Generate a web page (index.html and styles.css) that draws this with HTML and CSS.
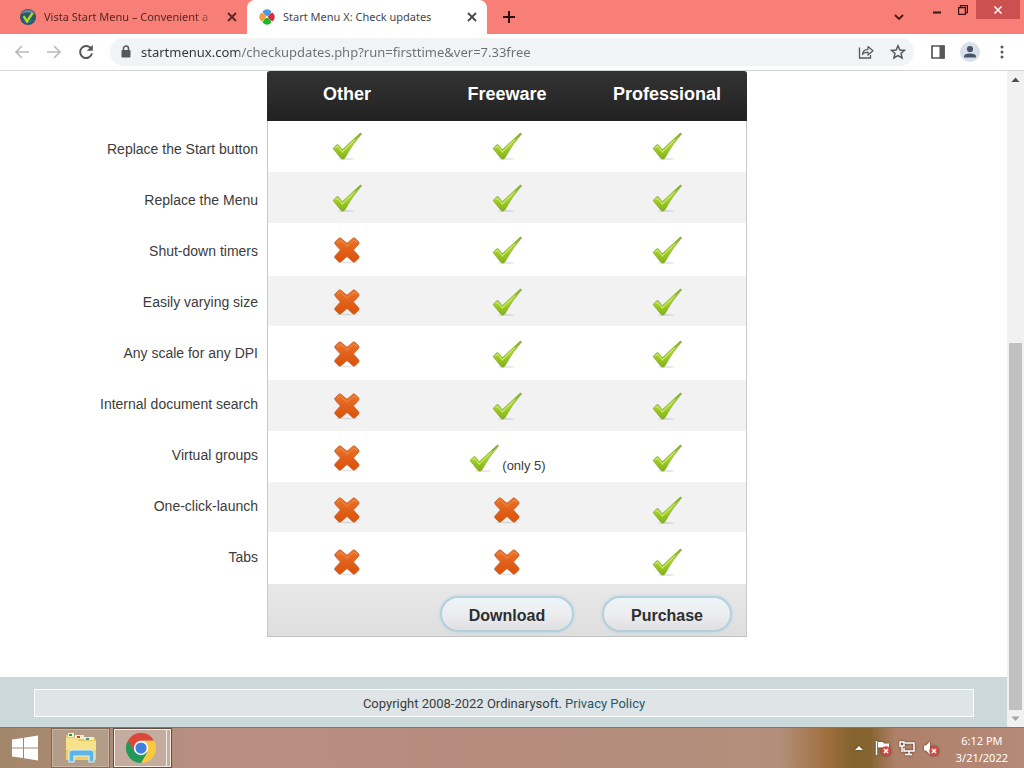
FILE: index.html
```html
<!DOCTYPE html>
<html lang="en">
<head>
<meta charset="utf-8">
<title>Start Menu X: Check updates</title>
<link rel="stylesheet" href="styles.css">
</head>
<body>
<svg class="defs" aria-hidden="true">
  <defs>
    <linearGradient id="green" x1="0" y1="0" x2="0" y2="1">
      <stop offset="0" stop-color="#7fa92e"/>
      <stop offset=".45" stop-color="#a5d63a"/>
      <stop offset="1" stop-color="#84b012"/>
    </linearGradient>
    <linearGradient id="orange" x1="0" y1="0" x2="0" y2="1">
      <stop offset="0" stop-color="#e8772e"/>
      <stop offset=".5" stop-color="#e2601a"/>
      <stop offset="1" stop-color="#dc5208"/>
    </linearGradient>
    <symbol id="yes" viewBox="0 0 32 32">
      <ellipse cx="15" cy="29" rx="8" ry="1" fill="#000" opacity=".1"/>
      <path d="M2 18.5 6 14.6Q6.8 14.2 7.5 15L11.2 19.8 29.4 3 30.6 3.8Q21 14.5 14.2 27.5 12.2 30.4 10 28.4Z" fill="url(#green)" stroke="#86a92f" stroke-width=".7"/>
      <path d="M4.4 18.2 6.6 16.2 11.2 22 24 9.600" fill="none" stroke="#c6e85a" stroke-width="1.2"/>
    </symbol>
    <symbol id="no" viewBox="0 0 32 32">
      <ellipse cx="16" cy="28.4" rx="11" ry="1" fill="#000" opacity=".1"/>
      <path d="M4 8 7.8 4.2Q9 3.4 10.2 4.5L16 9.3 21.6 4.5Q22.8 3.4 24 4.2L27.8 8Q28.6 9.2 27.500 10.4L22.4 16 27.500 21.6Q28.600 22.800 27.800 24L24 27.800Q22.800 28.600 21.600 27.500L16 22.500 10.200 27.500Q9 28.600 7.800 27.800L4 24Q3.200 22.800 4.300 21.600L9.400 16 4.300 10.400Q3.200 9.200 4 8Z" fill="url(#orange)" stroke="#c8602a" stroke-width=".8"/>
      <path d="M6 8.600 8.900 6 16 12.300 23 6 26 8.600" fill="none" stroke="#f08c48" stroke-width="1"/>
    </symbol>
    <symbol id="close" viewBox="0 0 10 10"><path d="M1 1 9 9M9 1 1 9" fill="none" stroke="currentColor" stroke-width="1.800"/></symbol>
    <symbol id="badge" viewBox="0 0 10 10"><circle cx="5" cy="5" r="4.800" fill="#d64a44"/><path d="M3 3 7 7M7 3 3 7" stroke="#fff" stroke-width="1.500"/></symbol>
  </defs>
</svg>

<header class="browser">
  <div class="tabstrip">
    <div class="tab">
      <svg class="favicon" viewBox="0 0 16 16"><circle cx="8" cy="8" r="8" fill="#2f5568"/><path d="M1 5A8 8 0 0 1 15 5Q8 2 1 5Z" fill="#5f8796"/><path d="M2 11Q8 17 14 11Q8 13 2 11Z" fill="#2b79a8"/><path d="M3.600 7.200 7 12.300 12.600 4" fill="none" stroke="#a5dc2c" stroke-width="2.400"/></svg>
      <button class="tab-title faded">Vista Start Menu – Convenient a</button>
      <button class="tab-close" aria-label="Close tab"><svg><use href="#close"/></svg></button>
    </div>
    <div class="tab active">
      <svg class="favicon" viewBox="0 0 16 16"><path d="M3.500 2.500Q8-2 12.500 2.500L10.800 5.500 8 7.400 5.200 5.500Z" fill="#4a9be0"/><path d="M13.500 3.500Q18 8 13.500 12.500L10.500 10.800 8.800 8 10.500 5.200Z" fill="#d92f3c"/><path d="M12.500 13.500Q8 18 3.500 13.500L5.200 10.500 8 8.600 10.800 10.500Z" fill="#1fb52b"/><path d="M2.500 12.500Q-2 8 2.500 3.500L5.500 5.200 7.200 8 5.500 10.800Z" fill="#eda03c"/></svg>
      <button class="tab-title">Start Menu X: Check updates</button>
      <button class="tab-close" aria-label="Close tab"><svg><use href="#close"/></svg></button>
    </div>
    <button class="new-tab" aria-label="New tab"><svg viewBox="0 0 12 12"><path d="M6 0V12M0 6H12" stroke="#2d0f0e" stroke-width="2"/></svg></button>
    <div class="window-controls">
      <button class="tab-search" aria-label="Search tabs"><svg viewBox="0 0 10 6"><path d="M1 1 5 5 9 1" fill="none" stroke="#4a1512" stroke-width="1.800"/></svg></button>
      <button class="window-button" aria-label="Minimize"><svg viewBox="0 0 10 10"><path d="M1 7.500H9" stroke="#3a1210" stroke-width="2"/></svg></button>
      <button class="window-button" aria-label="Restore"><svg viewBox="0 0 10 10"><path d="M.6 2.600H7.400V9.400H.6ZM2.400 2.400V.6H9.400V7.600H7.600" fill="none" stroke="#3a1210" stroke-width="1.200"/></svg></button>
      <button class="window-button window-close" aria-label="Close"><svg viewBox="0 0 10 10"><path d="M1.500 1.500 8.500 8.500M8.500 1.500 1.500 8.500" stroke="#fff" stroke-width="1.500"/></svg></button>
    </div>
  </div>
  <div class="toolbar">
    <button class="tool dim" aria-label="Back"><svg viewBox="0 0 16 16"><path d="M15 8H2M8 2 2 8 8 14" fill="none" stroke="currentColor" stroke-width="1.700"/></svg></button>
    <button class="tool dim" aria-label="Forward"><svg viewBox="0 0 16 16"><path d="M1 8H14M8 2 14 8 8 14" fill="none" stroke="currentColor" stroke-width="1.700"/></svg></button>
    <button class="tool" aria-label="Reload"><svg viewBox="0 0 16 16"><path d="M13.300 5A6 6 0 1 0 14 9.400" fill="none" stroke="currentColor" stroke-width="2"/><path d="M14.800 .8V6.800H8.800Z" fill="currentColor"/></svg></button>
    <div class="omnibox">
      <svg class="lock" viewBox="0 0 10 14"><path d="M2.500 6V3.500A2.500 2.500 0 0 1 7.500 3.500V6" fill="none" stroke="currentColor" stroke-width="1.500"/><rect x="0.500" y="5" width="9" height="7.500" rx="1" fill="currentColor"/></svg>
      <input class="url" type="text" aria-label="Address" value="startmenux.com/checkupdates.php?run=firsttime&amp;ver=7.33free">
      <button class="tool" aria-label="Share"><svg viewBox="0 0 16 16"><path d="M1.500 3.500V14H12.500V11" fill="none" stroke="currentColor" stroke-width="1.300"/><path d="M4.500 10.500Q5 5.500 10 5.300V2.500L15 6.800 10 11V8.200Q6.500 8 4.500 10.500Z" fill="none" stroke="currentColor" stroke-width="1.200" stroke-linejoin="round"/></svg></button>
      <button class="tool" aria-label="Bookmark this tab"><svg viewBox="0 0 16 16"><path d="M8 1.800 9.900 6 14.500 6.400 11 9.400 12.100 13.900 8 11.500 3.900 13.900 5 9.400 1.500 6.400 6.100 6Z" fill="none" stroke="currentColor" stroke-width="1.500"/></svg></button>
    </div>
    <div class="toolbar-end">
      <button class="tool" aria-label="Side panel"><svg viewBox="0 0 16 16"><path d="M2 2H14V14H2Z" fill="none" stroke="currentColor" stroke-width="1.700"/><path d="M9.500 1.500H14.500V14.500H9.500Z" fill="currentColor"/></svg></button>
      <button class="tool avatar" aria-label="Profile"><svg viewBox="0 0 16 16"><circle cx="8" cy="5" r="3.100" fill="#4a5568"/><path d="M2 13.500V12.500Q2 9.500 8 9.500T14 12.500V13.500Z" fill="#4a5568"/></svg></button>
      <button class="tool" aria-label="Menu"><svg viewBox="0 0 16 16" fill="currentColor"><circle cx="8" cy="3" r="1.500"/><circle cx="8" cy="8" r="1.500"/><circle cx="8" cy="13" r="1.500"/></svg></button>
    </div>
  </div>
</header>

<div class="viewport">
  <div class="page">
    <main class="comparison">
      <ul class="features">
        <li>Replace the Start button</li>
        <li>Replace the Menu</li>
        <li>Shut-down timers</li>
        <li>Easily varying size</li>
        <li>Any scale for any DPI</li>
        <li>Internal document search</li>
        <li>Virtual groups</li>
        <li>One-click-launch</li>
        <li>Tabs</li>
      </ul>
      <table class="editions">
        <thead><tr><th scope="col">Other</th><th scope="col">Freeware</th><th scope="col">Professional</th></tr></thead>
        <tbody>
          <tr><td><svg class="mark"><use href="#yes"/></svg></td><td><svg class="mark"><use href="#yes"/></svg></td><td><svg class="mark"><use href="#yes"/></svg></td></tr>
          <tr><td><svg class="mark"><use href="#yes"/></svg></td><td><svg class="mark"><use href="#yes"/></svg></td><td><svg class="mark"><use href="#yes"/></svg></td></tr>
          <tr><td><svg class="mark"><use href="#no"/></svg></td><td><svg class="mark"><use href="#yes"/></svg></td><td><svg class="mark"><use href="#yes"/></svg></td></tr>
          <tr><td><svg class="mark"><use href="#no"/></svg></td><td><svg class="mark"><use href="#yes"/></svg></td><td><svg class="mark"><use href="#yes"/></svg></td></tr>
          <tr><td><svg class="mark"><use href="#no"/></svg></td><td><svg class="mark"><use href="#yes"/></svg></td><td><svg class="mark"><use href="#yes"/></svg></td></tr>
          <tr><td><svg class="mark"><use href="#no"/></svg></td><td><svg class="mark"><use href="#yes"/></svg></td><td><svg class="mark"><use href="#yes"/></svg></td></tr>
          <tr><td><svg class="mark"><use href="#no"/></svg></td><td><div class="limited"><svg class="mark"><use href="#yes"/></svg><span>(only 5)</span></div></td><td><svg class="mark"><use href="#yes"/></svg></td></tr>
          <tr><td><svg class="mark"><use href="#no"/></svg></td><td><svg class="mark"><use href="#no"/></svg></td><td><svg class="mark"><use href="#yes"/></svg></td></tr>
          <tr><td><svg class="mark"><use href="#no"/></svg></td><td><svg class="mark"><use href="#no"/></svg></td><td><svg class="mark"><use href="#yes"/></svg></td></tr>
        </tbody>
        <tfoot><tr><td></td><td><button class="pill">Download</button></td><td><button class="pill">Purchase</button></td></tr></tfoot>
      </table>
    </main>
    <footer class="site-footer">
      <p class="copyright">Copyright 2008-2022 Ordinarysoft. <a href="#privacy">Privacy Policy</a></p>
    </footer>
  </div>
  <div class="scrollbar" aria-hidden="true">
    <svg class="arrow" viewBox="0 0 17 17"><path d="M4.500 11 8.500 6.500 12.500 11Z" fill="#505050"/></svg>
    <div class="track"><div class="thumb"></div></div>
    <svg class="arrow" viewBox="0 0 17 17"><path d="M4.500 6.500 8.500 11 12.500 6.500Z" fill="#a3a3a3"/></svg>
  </div>
</div>

<nav class="taskbar">
  <button class="start" aria-label="Start"><svg viewBox="0 0 28 28"><path d="M1 5.500 12 4V13.500H1ZM13 3.800 27 1.500V13.500H13ZM1 14.500H12V24L1 22.500ZM13 14.500H27V26.500L13 24.200Z" fill="#fff"/></svg></button>
  <button class="app" aria-label="File Explorer"><svg viewBox="0 0 34 32"><path d="M2 3H9L11 5H30L32 8V28H2Z" fill="#e9c95c"/><path d="M4 1H10V5H4Z" fill="#eef3d2"/><path d="M5 2H8V4H5Z" fill="#2b9a3c"/><path d="M11 3H20V7H11Z" fill="#f2ecd0"/><path d="M13 4H16V6H13Z" fill="#cf4030"/><path d="M20 5H30V8H20Z" fill="#f2ecd0"/><path d="M22 6H25V8H22Z" fill="#389aa0"/><path d="M2 6H13L15 9H32V28H2Z" fill="#f6e28b"/><path d="M2 18H32V28H2Z" fill="#efd068"/><path d="M5 30V21Q5 18 9 18H26Q30 18 30 21V30H25V24H10V30Z" fill="#5eb4e4" stroke="#d5f0fb" stroke-width="1.200"/></svg></button>
  <button class="app current" aria-label="Google Chrome"><svg viewBox="0 0 48 48"><path d="M24 12H44.800A24 24 0 0 1 24 48L34.400 30Z" fill="#fbc93d"/><path d="M24 24 34.400 30 24 48A24 24 0 0 1 3.200 12Z" fill="#239957"/><path d="M3.200 12A24 24 0 0 1 44.800 12H24L13.600 30Z" fill="#dd473b"/><circle cx="24" cy="24" r="11.500" fill="#fff"/><circle cx="24" cy="24" r="9" fill="#3f7fe0"/></svg></button>
  <div class="tray">
    <button class="tray-icon" aria-label="Show hidden icons"><svg viewBox="0 0 16 16"><path d="M4 10 8 6 12 10Z" fill="#fff"/></svg></button>
    <button class="tray-icon" aria-label="Action Center"><svg viewBox="0 0 16 16"><path d="M1.500 1V15" stroke="#fff" stroke-width="1.500"/><path d="M3 2H8L9 3.500H14V9H9L8 7.500H3Z" fill="#fff"/><use href="#badge" x="6" y="6" width="10" height="10"/></svg></button>
    <button class="tray-icon" aria-label="Network"><svg viewBox="0 0 16 16"><path d="M6 3H15V11H5V8M10 11V14M6 14.500H13M1 2H5V6H1ZM3 6V12" fill="none" stroke="#fff" stroke-width="1.500"/></svg></button>
    <button class="tray-icon" aria-label="Volume"><svg viewBox="0 0 16 16"><path d="M1 5.500H3L7 1.500V14.500L3 10.500H1Z" fill="#fff"/><use href="#badge" x="6" y="6" width="10" height="10"/></svg></button>
    <div class="clock"><time>6:12 PM</time><time datetime="2022-03-21">3/21/2022</time></div>
  </div>
</nav>
</body>
</html>
```
FILE: styles.css
```css
* { box-sizing: border-box; }

body {
  margin: 0;
  height: 100vh;
  display: flex;
  flex-direction: column;
  overflow: hidden;
  background: #fff;
  color: #3c3c3c;
  font: 14px/18px "Liberation Sans", Arial, sans-serif;
}

button {
  padding: 0;
  border: 0;
  background: none;
  color: inherit;
  font: inherit;
}

svg { display: block; }
.defs { width: 0; height: 0; position: absolute; }

/* Browser window */
.browser {
  flex: none;
  border-bottom: 1px solid #d3d6d8;
  font: 11px/16px "Noto Sans", "Open Sans", sans-serif;
}

.tabstrip {
  display: flex;
  height: 34px;
  padding-left: 8px;
  background: #f77f77;
}

.tab {
  display: flex;
  align-items: center;
  gap: 8px;
  width: 239px;
  padding: 0 10px 0 12px;
  color: #5a2523;
}

.tab.active {
  width: 240px;
  border-radius: 8px 8px 0 0;
  background: #fff;
  color: #45484c;
}

.favicon { flex: none; width: 16px; height: 16px; }

.tab-title {
  flex: 1;
  min-width: 0;
  overflow: hidden;
  text-align: left;
  white-space: nowrap;
}

.faded { mask-image: linear-gradient(to right, #000 150px, transparent 178px); }

.tab-close svg { width: 10px; height: 10px; }

.new-tab { width: 44px; }
.new-tab svg { width: 12px; height: 12px; margin: auto; }

.window-controls {
  display: flex;
  align-items: flex-start;
  margin-left: auto;
  padding-right: 4px;
}

.tab-search { height: 34px; padding-right: 20px; }
.tab-search svg { width: 10px; height: 6px; }
.window-button { width: 26px; height: 19px; }
.window-button svg { width: 10px; height: 10px; margin: auto; }
.window-close { width: 44px; background: #cb5050; }

.toolbar {
  display: flex;
  align-items: center;
  gap: 16px;
  height: 36px;
  padding: 0 14px;
  background: #fff;
  color: #55585c;
}

.toolbar-end { display: flex; align-items: center; gap: 14px; }
.tool svg { width: 16px; height: 16px; }
.tool.dim { color: #b9bbbd; }

.omnibox {
  flex: 1;
  display: flex;
  align-items: center;
  gap: 16px;
  height: 28px;
  padding: 0 8px 0 11px;
  border-radius: 14px;
  background: #f1f3f4;
}

.lock { width: 10px; height: 14px; }

.url {
  flex: 1;
  min-width: 0;
  height: 24px;
  margin-left: -6px;
  padding: 0;
  border: 0;
  outline: 0;
  background: linear-gradient(to right, #303336 98px, #6b6f73 98px);
  background-clip: text;
  color: transparent;
  font: 13px/20px "Noto Sans", "Open Sans", sans-serif;
}

.avatar { padding: 2px; border-radius: 50%; background: #d9dfe8; }

/* Page and scrollbar */
.viewport { flex: 1; min-height: 0; display: flex; }

.page {
  flex: 1;
  min-width: 0;
  display: flex;
  flex-direction: column;
  justify-content: space-between;
}

.comparison {
  display: flex;
  width: 100%;
  max-width: 1008px;
  margin: 0 auto;
  padding: 0 34px;
}

.features {
  width: 233px;
  margin: 0;
  padding: 53px 9px 0 0;
  list-style: none;
  text-align: right;
}

.features li { line-height: 51px; }

.editions {
  width: 480px;
  table-layout: fixed;
  border-collapse: separate;
  border-spacing: 0;
  border-bottom: 1px solid #c2c2c2;
  border-radius: 3px 3px 0 0;
  background:
    linear-gradient(#333, #222) 0 0 / 100% 50px no-repeat,
    linear-gradient(#c9c9c9, #c9c9c9) 0 0 / 1px 100% no-repeat,
    linear-gradient(#c9c9c9, #c9c9c9) 100% 0 / 1px 100% no-repeat,
    linear-gradient(#f2f2f2, #f2f2f2) 0 101px / 100% 51px no-repeat,
    linear-gradient(#f2f2f2, #f2f2f2) 0 205px / 100% 50px no-repeat,
    linear-gradient(#f2f2f2, #f2f2f2) 0 309px / 100% 51px no-repeat,
    linear-gradient(#f2f2f2, #f2f2f2) 0 411px / 100% 50px no-repeat,
    linear-gradient(#e8e8e8, #dedede) 0 100% / 100% 52px no-repeat,
    #fff;
}

.editions th {
  height: 49px;
  padding: 0 0 4px;
  color: #fff;
  font-size: 18px;
  line-height: 20px;
}

.editions td { height: 52px; padding: 0; }
.mark { width: 32px; height: 32px; margin: 0 auto; }

.limited {
  display: flex;
  justify-content: center;
  align-items: flex-end;
  gap: 2px;
  font-size: 13px;
  line-height: 16px;
}
.limited .mark { margin: 0; }

.editions tfoot td {
  height: 48px;
  padding: 8px 0 4px;
  text-align: center;
}

.pill {
  height: 36px;
  padding: 4px 27px 0;
  border: 2px solid #b3d0dc;
  border-radius: 18px;
  background: linear-gradient(#eef5f7, #ededf0 50%, #e0dfe1);
  box-shadow: 0 0 3px #a9d3e6;
  color: #2c2f31;
  font-size: 16px;
  font-weight: bold;
  line-height: 20px;
}

.site-footer {
  padding: 12px 33px 10px 34px;
  background: #ccd9da;
}

.copyright {
  margin: 0;
  padding: 5px 4px 3px;
  border: 1px solid #fff;
  background: #dfe4e7;
  font-family: Roboto, sans-serif;
  font-size: 13px;
  text-align: center;
}

.copyright a { color: #275a68; text-decoration: none; }

.scrollbar {
  display: flex;
  flex-direction: column;
  width: 17px;
  background: #f1f1f1;
}

.arrow { width: 17px; height: 17px; }

.track {
  flex: 1;
  display: flex;
  align-items: flex-end;
  padding: 0 2px;
}

.thumb { width: 100%; height: 59%; background: #c1c1c1; }

/* Taskbar */
.taskbar {
  flex: none;
  display: flex;
  height: 41px;
  border-top: 1px solid #8d7564;
  background: linear-gradient(to right, #a3876a, #ab8b75 110px, #b98f84 200px, #b58b7e 500px, #b28f7b 780px, #a1703f 825px, #866430 850px, #866430 870px, #ae8069 895px, #b58a78);
}

.start { width: 51px; padding-left: 11px; }
.start svg { width: 28px; height: 28px; }

.app {
  width: 59px;
  border: 1px solid #806b5a;
  box-shadow: inset 0 0 0 1px #c9b29f;
  background: #b39d89;
}

.app svg { width: 34px; height: 32px; margin: auto; }

.app.current {
  margin-left: 3px;
  padding-right: 4px;
  border-color: #5f5148;
  box-shadow: inset 0 0 0 1px #f5ebe2, inset -4px 0 0 #c3ae9c, inset -5px 0 0 #f5ebe2;
  background: #c4ada0;
}

.app.current svg { width: 30px; height: 30px; }

.tray {
  display: flex;
  align-items: center;
  gap: 8px;
  margin-left: auto;
  padding-right: 16px;
}

.tray-icon svg {
  width: 16px;
  height: 16px;
  filter: drop-shadow(0 0 1px #4a3022);
}

.clock {
  display: flex;
  flex-direction: column;
  padding: 2px 0 0 9px;
  color: #fff;
  font: 11px/17px "Noto Sans", "Open Sans", sans-serif;
  text-align: center;
}
```
